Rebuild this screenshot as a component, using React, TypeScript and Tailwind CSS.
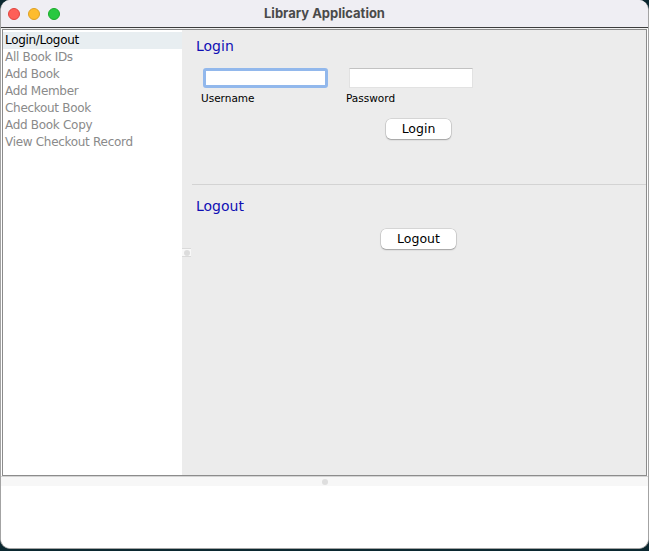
import React from "react";

const items = [
  "Login/Logout",
  "All Book IDs",
  "Add Book",
  "Add Member",
  "Checkout Book",
  "Add Book Copy",
  "View Checkout Record",
];

const dv = { fontFamily: '"DejaVu Sans", "Liberation Sans", sans-serif' };

export default function App() {
  return (
    <div className="w-[649px] h-[551px] bg-[#0b2830] overflow-hidden">
      <div className="w-[649px] h-[549px] bg-white rounded-[10px] overflow-hidden border border-t-0 border-[#a3a3a3] flex flex-col">
        {/* title bar */}
        <div className="h-[28px] shrink-0 bg-[#efeef3] border-b border-[#3c3c3c] grid grid-cols-[1fr_auto_1fr] items-center">
          <div className="flex items-center gap-[8px] pl-[7px]">
            <span className="w-[12px] h-[12px] rounded-full bg-[#fe5f57] border border-[#e0443e]" />
            <span className="w-[12px] h-[12px] rounded-full bg-[#febc2e] border border-[#dea123]" />
            <span className="w-[12px] h-[12px] rounded-full bg-[#28c840] border border-[#1aab29]" />
          </div>
          <div
            className="text-[13px] font-bold text-[#4a4a4a] leading-none pb-[1px]"
            style={{ fontFamily: 'Inter, "Liberation Sans", sans-serif' }}
          >
            Library Application
          </div>
          <div />
        </div>
        <div className="h-[1px] shrink-0 bg-[#f0f0f0]" />
        {/* main frame */}
        <div className="h-[447px] shrink-0 mx-[1px] border border-[#8c8c8c] flex">
          <div className="w-[179px] shrink-0 bg-white pt-[2px]" style={dv}>
            {items.map((it, i) => (
              <div
                key={it}
                className={
                  "h-[17px] leading-[17px] pl-[2px] text-[12px] tracking-[-0.3px] " +
                  (i === 0 ? "bg-[#e8eef1] text-black" : "text-[#8a8a8a]")
                }
              >
                {it}
              </div>
            ))}
          </div>
          <div className="relative flex-1 bg-[#ececec] flex flex-col" style={dv}>
            <div className="mt-[7px] ml-[14px] text-[14px] leading-[18px] text-[#1010b4]">Login</div>
            <div className="mt-[13px] ml-[19px] flex">
              <div className="w-[145px] flex flex-col">
                <div className="ml-[2px] w-[125px] h-[20px] bg-white border-[3px] border-[#92b8ec] rounded-[3px]" />
                <div className="mt-[4px] text-[10.5px] leading-[13px] text-black">Username</div>
              </div>
              <div className="flex flex-col">
                <div className="ml-[3px] w-[124px] h-[20px] bg-white border border-[#e2e2e2] border-t-[#c2c2c2]" />
                <div className="mt-[4px] text-[10.5px] leading-[13px] text-black">Password</div>
              </div>
            </div>
            <div className="mt-[14px] ml-[204px] w-[65px] h-[20px] bg-white rounded-[5px] shadow-[0_0_0_0.5px_rgba(0,0,0,0.18),0_1px_1.5px_rgba(0,0,0,0.25)] flex items-center justify-center text-[12.5px] text-black">
              Login
            </div>
            <div className="mt-[45px] ml-[10px] h-[1px] bg-[#d3d3d3]" />
            <div className="mt-[12px] ml-[14px] text-[14px] leading-[18px] text-[#1010b4]">Logout</div>
            <div className="mt-[14px] ml-[199px] w-[75px] h-[20px] bg-white rounded-[5px] shadow-[0_0_0_0.5px_rgba(0,0,0,0.18),0_1px_1.5px_rgba(0,0,0,0.25)] flex items-center justify-center text-[12.5px] text-black">
              Logout
            </div>
            <div className="absolute left-0 top-[218px] w-[9px] h-[9px] bg-[#f8f8f8] border-y border-[#dadada] flex items-center justify-center">
              <span className="w-[6px] h-[6px] rounded-full bg-[#dcdcdc]" />
            </div>
          </div>
        </div>
        <div className="h-[1px] shrink-0 bg-[#d4d4d4]" />
        {/* bottom panel */}
        <div className="flex-1 bg-white flex flex-col">
          <div className="h-[9px] bg-[#f7f7f7] flex items-center justify-center">
            <span className="w-[6px] h-[6px] rounded-full bg-[#dedede]" />
          </div>
        </div>
      </div>
    </div>
  );
}
